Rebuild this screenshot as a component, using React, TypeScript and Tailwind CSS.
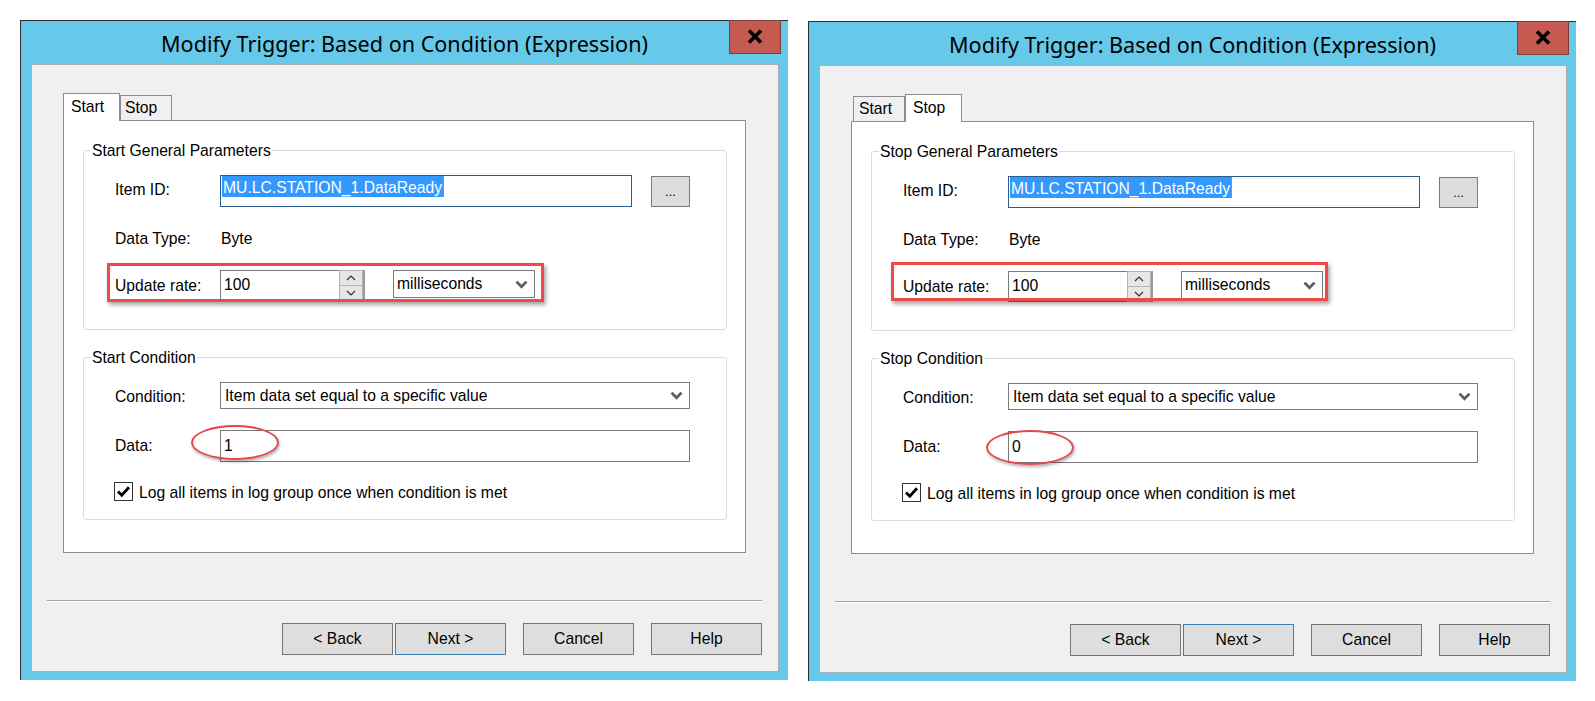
import React from "react";

type Mode = "Start" | "Stop";

function SelectChevron() {
  return (
    <svg width="13" height="9" viewBox="0 0 13 9" className="ml-auto mr-[6px] shrink-0">
      <path d="M1.5 1.6 L6.5 6.8 L11.5 1.6" fill="none" stroke="#5e5e5e" strokeWidth="2.8" />
    </svg>
  );
}

function Spinner() {
  return (
    <div className="flex h-[31px] w-[26px] flex-col border-r-2 border-[#9a9a9a]">
      <div className="flex h-[16px] items-center justify-center border border-[#b4b4b4] bg-[#e6e6e6]">
        <svg width="10" height="6" viewBox="0 0 10 6">
          <path d="M1 5 L5 1 L9 5" fill="none" stroke="#333" strokeWidth="1.2" />
        </svg>
      </div>
      <div className="flex h-[15px] items-center justify-center border border-t-0 border-[#b4b4b4] bg-[#e6e6e6]">
        <svg width="10" height="6" viewBox="0 0 10 6">
          <path d="M1 1 L5 5 L9 1" fill="none" stroke="#333" strokeWidth="1.2" />
        </svg>
      </div>
    </div>
  );
}

function Tab({ label, active, first }: { label: string; active: boolean; first: boolean }) {
  if (active) {
    return (
      <div className="relative z-10 -mb-px h-[28px] w-[57px] border border-b-0 border-[#898c95] bg-white pl-[7px] pt-[3px] leading-[20px]">
        {label}
      </div>
    );
  }
  return (
    <div
      className={`h-[25px] w-[52px] border border-b-0 border-[#898c95] bg-[#f0f0f0] pl-[4px] pt-[2px] leading-[20px] ${
        first ? "ml-[2px] pl-[5px]" : ""
      }`}
    >
      {label}
    </div>
  );
}

function Group({ title, className, children }: { title: string; className: string; children: React.ReactNode }) {
  return (
    <div className={`relative ml-[19px] w-[644px] rounded-[3px] border border-[#d5dde5] pl-[31px] pt-[24px] ${className}`}>
      <span className="absolute left-[7px] top-[-10px] bg-white px-px leading-[20px]">{title}</span>
      {children}
    </div>
  );
}

function WizButton({ label, focused }: { label: string; focused?: boolean }) {
  return (
    <div
      className={`flex h-[32px] w-[111px] items-center justify-center border bg-[#dedede] ${
        focused ? "border-[#3c7fb1]" : "border-[#767676]"
      }`}
    >
      {label}
    </div>
  );
}

function Dialog({
  mode,
  value,
  markPos,
  ringPos,
}: {
  mode: Mode;
  value: string;
  markPos: string;
  ringPos: string;
}) {
  return (
    <div className="relative flex h-[660px] w-[768px] shrink-0 flex-col border-l border-t border-[#2c2c2c] bg-[#66c9e9] font-['Liberation_Sans',Arial,sans-serif] text-[15.7px] text-black">
      <div className="flex h-[43px] items-center justify-center pt-[4px] font-['Noto_Sans',sans-serif] text-[21.6px]">
        Modify Trigger: Based on Condition (Expression)
      </div>
      <div className="absolute right-[7px] top-[-1px] flex h-[34px] w-[52px] items-center justify-center border border-[#7e3c36] bg-[#c45a50] pb-px">
        <svg width="16" height="15" viewBox="0 0 16 15">
          <path d="M2 1.5 L14 13.5 M14 1.5 L2 13.5" stroke="#000" strokeWidth="3.6" />
        </svg>
      </div>

      <div className="mb-[8px] ml-[10px] mr-[9px] flex flex-1 flex-col border border-[#a7b0ba] bg-[#f0f0f0]">
        <div className="ml-[31px] mt-[28px] flex h-[27px] items-end">
          <Tab label="Start" active={mode === "Start"} first />
          <Tab label="Stop" active={mode === "Stop"} first={false} />
        </div>
        <div className="ml-[31px] h-[433px] w-[683px] border border-[#898c95] bg-white pt-[29px]">
          <Group title={`${mode} General Parameters`} className="h-[180px]">
            <div className="flex h-[32px] items-center">
              <div className="w-[105px] pb-[2px]">Item ID:</div>
              <div className="flex h-[32px] w-[412px] items-start border border-[#2e5c8a] bg-white pl-px">
                <span className="inline-block h-[21px] bg-[#3399ff] px-px pt-[2px] leading-[19px] text-white">
                  MU.LC.STATION_1.DataReady
                </span>
                <span className="h-[21px] w-px bg-[#d9822b]" />
              </div>
              <div className="ml-[19px] flex h-[31px] w-[39px] items-center justify-center self-end border border-[#7a7a7a] bg-[#dddddd] text-[13px]">
                ...
              </div>
            </div>
            <div className="flex h-[63px] items-center">
              <div className="w-[105px] pt-px">Data Type:</div>
              <div className="pl-px pt-px">Byte</div>
            </div>
            <div className="flex h-[31px] items-center">
              <div className="w-[105px] pt-px">Update rate:</div>
              <div className="flex h-[31px] w-[119px] items-center border border-r-0 border-[#7a7a7a] bg-white pb-[2px] pl-[3px]">
                100
              </div>
              <Spinner />
              <div className="ml-[28px] flex h-[28px] w-[142px] items-center self-start border border-[#7a7a7a] bg-white pl-[3px]">
                milliseconds
                <SelectChevron />
              </div>
            </div>
          </Group>

          <Group title={`${mode} Condition`} className="mt-[27px] h-[163px]">
            <div className="flex h-[27px] items-center">
              <div className="w-[105px] pt-[2px]">Condition:</div>
              <div className="flex h-[27px] w-[470px] items-center border border-[#7a7a7a] bg-white pl-[4px]">
                Item data set equal to a specific value
                <SelectChevron />
              </div>
            </div>
            <div className="mt-[21px] flex h-[32px] items-center">
              <div className="w-[105px]">Data:</div>
              <div className="flex h-[32px] w-[470px] items-center border border-[#7a7a7a] bg-white pb-[1px] pl-[3px]">
                {value}
              </div>
            </div>
            <div className="mt-[20px] flex h-[19px] items-center">
              <div className="-ml-px flex h-[19px] w-[19px] items-center justify-center border border-[#333] bg-white">
                <svg width="15" height="13" viewBox="0 0 15 13">
                  <path d="M2 6.5 L5.8 10.3 L13 2.2" fill="none" stroke="#000" strokeWidth="2.8" />
                </svg>
              </div>
              <div className="ml-[6px] pt-[3px]">Log all items in log group once when condition is met</div>
            </div>
          </Group>
        </div>

        <div className="ml-[15px] mt-[47px] h-[2px] w-[715px] border-b border-t border-b-white border-t-[#a0a0a0]" />

        <div className="mr-[16px] mt-[21px] flex justify-end">
          <WizButton label="< Back" />
          <div className="ml-[2px]">
            <WizButton label="Next >" focused />
          </div>
          <div className="ml-[17px]">
            <WizButton label="Cancel" />
          </div>
          <div className="ml-[17px]">
            <WizButton label="Help" />
          </div>
        </div>
      </div>

      <div className={`pointer-events-none absolute h-[39px] w-[437px] border-[3px] border-[#f24848] shadow-[2px_3px_4px_rgba(0,0,0,0.35)] ${markPos}`} />
      <div className={`pointer-events-none absolute h-[35px] w-[88px] rounded-[50%] border-2 border-[#e24a4a] shadow-[1px_2px_3px_rgba(0,0,0,0.3)] ${ringPos}`} />
    </div>
  );
}

export default function App() {
  return (
    <div className="flex h-[701px] w-[1595px] gap-[20px] bg-white pl-[20px] pt-[20px]">
      <Dialog mode="Start" value="1" markPos="left-[86px] top-[242px]" ringPos="left-[170px] top-[404px]" />
      <div className="mt-px">
        <Dialog mode="Stop" value="0" markPos="left-[82px] top-[240px]" ringPos="left-[177px] top-[408px]" />
      </div>
    </div>
  );
}
